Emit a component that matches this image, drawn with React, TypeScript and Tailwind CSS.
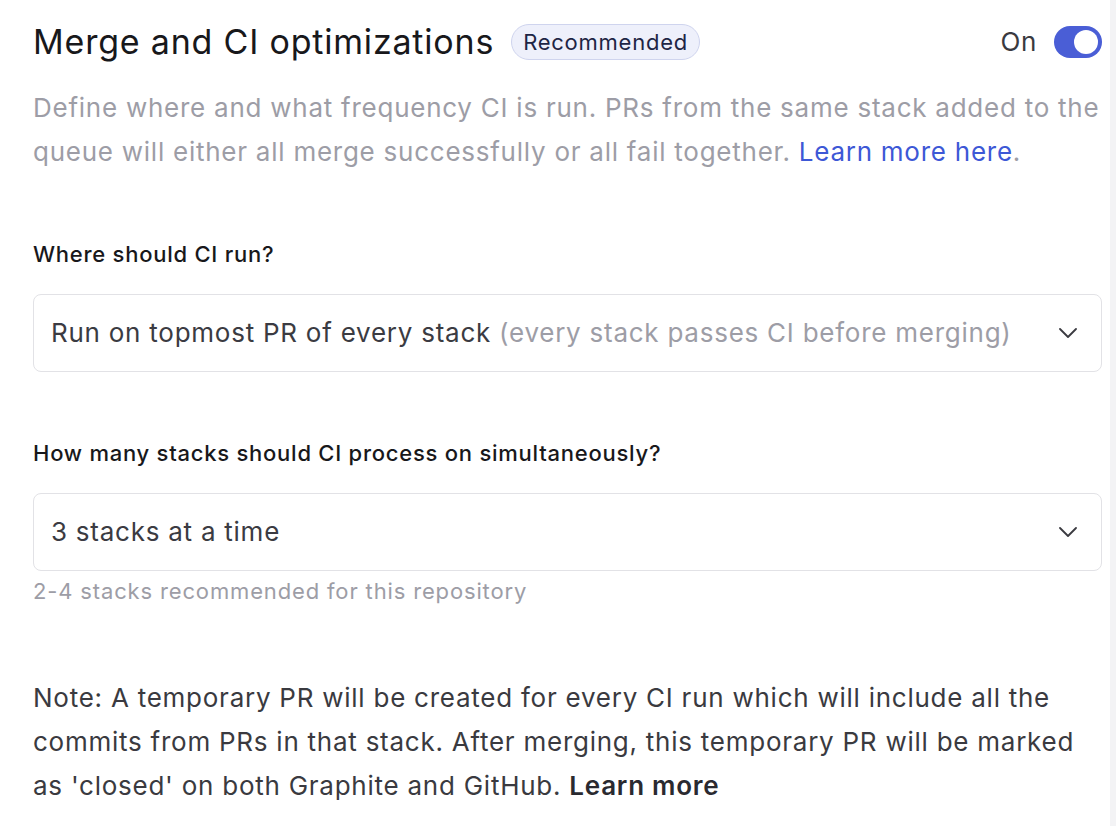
const Chevron = () => (
  <svg width="18" height="10" viewBox="0 0 18 10" fill="none" className="shrink-0">
    <polyline points="1,1 9,9 17,1" stroke="#3a3a40" strokeWidth="1.8" strokeLinecap="round" strokeLinejoin="round" />
  </svg>
);

const Select = ({ children }: { children: React.ReactNode }) => (
  <div className="flex h-[78px] items-center justify-between rounded-[8px] border border-[#e2e2e6] bg-white pl-[17px] pr-[24px]">
    <div className="text-[26px] leading-[36px] tracking-[0.75px] text-[#3b3b42]">{children}</div>
    <Chevron />
  </div>
);

export default function App() {
  return (
    <div className="flex min-h-[826px] w-full bg-[#f3f3f5] font-['Inter',sans-serif]">
      <div className="w-[1110px] bg-white pl-[33px] pr-[8px]">
        {/* header */}
        <div className="flex h-[84px] items-center justify-between">
          <div className="flex items-center gap-[17px]">
            <h1 className="text-[34px] font-normal leading-[40px] tracking-[0.8px] text-[#18181b]">
              Merge and CI optimizations
            </h1>
            <span className="flex h-[36px] items-center rounded-full border border-[#cfd4ee] bg-[#eef0fb] px-[11px] text-[22px] leading-none tracking-[0.75px] text-[#1e2545]">
              Recommended
            </span>
          </div>
          <div className="flex items-center gap-[17px]">
            <span className="text-[26px] leading-none tracking-[0.6px] text-[#3a3a40]">On</span>
            <div className="flex h-[32px] w-[48px] items-center justify-end rounded-full bg-[#4a5ed6] px-[4px]">
              <div className="h-[24px] w-[24px] rounded-full bg-white" />
            </div>
          </div>
        </div>

        <p className="mt-[2px] text-[26px] leading-[44px] tracking-[0.75px] text-[#9d9da6]">
          Define where and what frequency CI is run. PRs from the same stack added to the queue will either all merge
          successfully or all fail together. <span className="text-[#3d58d6]">Learn more here</span>.
        </p>

        <div className="mt-[65px] text-[22px] font-medium leading-[30px] tracking-[0.75px] text-[#18181b]">
          Where should CI run?
        </div>
        <div className="mt-[25px]">
          <Select>
            Run on topmost PR of every stack{" "}
            <span className="text-[#9d9da6]">(every stack passes CI before merging)</span>
          </Select>
        </div>

        <div className="mt-[66px] text-[22px] font-medium leading-[30px] tracking-[0.75px] text-[#18181b]">
          How many stacks should CI process on simultaneously?
        </div>
        <div className="mt-[25px]">
          <Select>3 stacks at a time</Select>
        </div>
        <div className="mt-[5px] text-[22px] leading-[30px] tracking-[0.85px] text-[#9d9da6]">
          2-4 stacks recommended for this repository
        </div>

        <p className="mt-[70px] text-[26px] leading-[44px] tracking-[0.75px] text-[#3a3a40]">
          Note: A temporary PR will be created for every CI run which will include all the commits from PRs in that
          stack. After merging, this temporary PR will be marked as 'closed' on both Graphite and GitHub.{" "}
          <span className="font-semibold text-[#2a2a30]">Learn more</span>
        </p>
      </div>
    </div>
  );
}
